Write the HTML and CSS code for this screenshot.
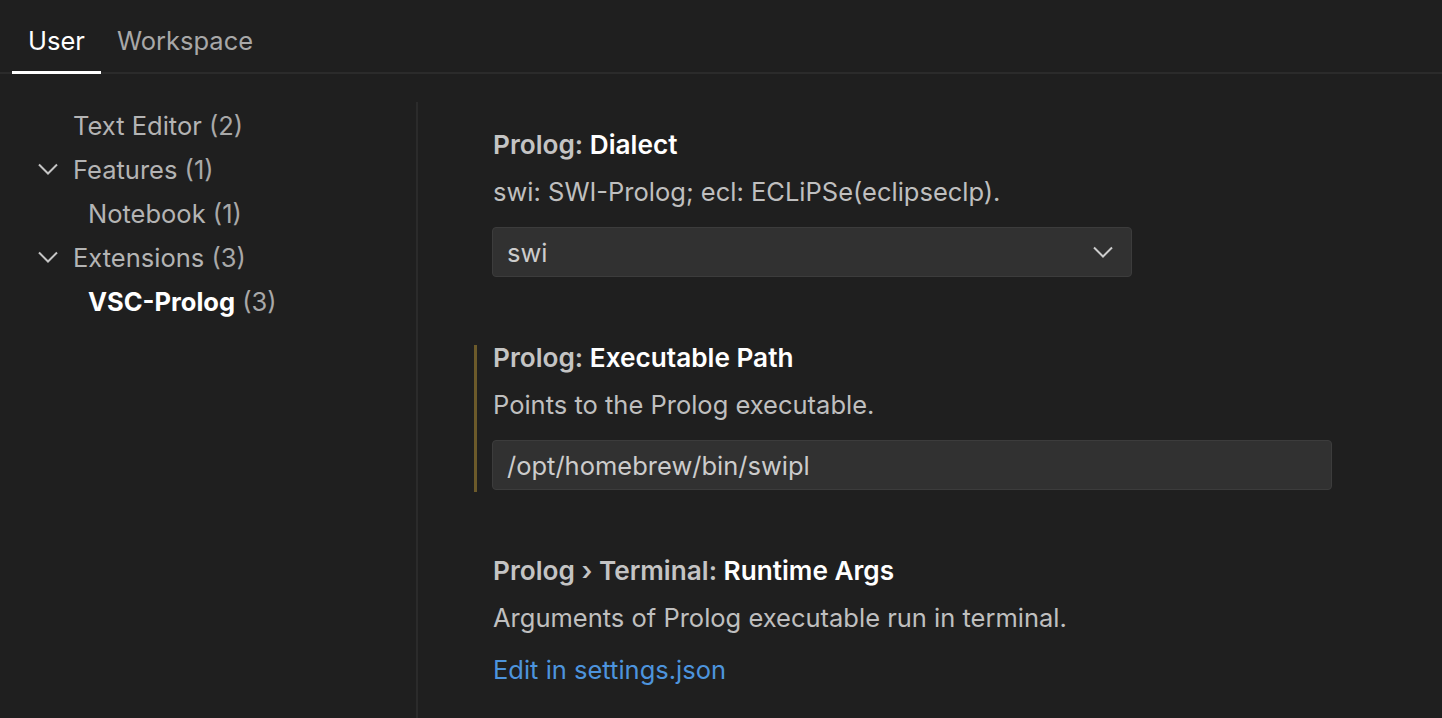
FILE: index.html
```html
<!DOCTYPE html>
<html>
<head>
<meta charset="utf-8">
<link rel="stylesheet" href="styles.css">
</head>
<body>
<div class="page">
  <div class="tabs">
    <div class="tab active">User</div>
    <div class="tab">Workspace</div>
  </div>
  <div class="body">
    <nav class="tree">
      <div class="row lvl1"><span class="twisty"></span><span class="label">Text Editor <span class="count">(2)</span></span></div>
      <div class="row lvl1"><span class="twisty"><svg width="20" height="12" viewBox="0 0 20 12"><path d="M1 1.5 L10 10.5 L19 1.5" fill="none" stroke="#c5c5c5" stroke-width="2"/></svg></span><span class="label">Features <span class="count">(1)</span></span></div>
      <div class="row lvl2"><span class="label">Notebook <span class="count">(1)</span></span></div>
      <div class="row lvl1"><span class="twisty"><svg width="20" height="12" viewBox="0 0 20 12"><path d="M1 1.5 L10 10.5 L19 1.5" fill="none" stroke="#c5c5c5" stroke-width="2"/></svg></span><span class="label">Extensions <span class="count">(3)</span></span></div>
      <div class="row lvl2 selected"><span class="label"><b>VSC-Prolog</b> <span class="count">(3)</span></span></div>
    </nav>
    <div class="sash"></div>
    <main class="settings">
      <section class="setting">
        <div class="title"><span class="cat">Prolog: </span>Dialect</div>
        <div class="desc">swi: SWI-Prolog; ecl: ECLiPSe(eclipseclp).</div>
        <div class="select"><span>swi</span><svg width="20" height="12" viewBox="0 0 20 12"><path d="M1 1.5 L10 10.5 L19 1.5" fill="none" stroke="#cccccc" stroke-width="2"/></svg></div>
      </section>
      <section class="setting modified">
        <div class="title"><span class="cat">Prolog: </span>Executable Path</div>
        <div class="desc">Points to the Prolog executable.</div>
        <div class="input">/opt/homebrew/bin/swipl</div>
      </section>
      <section class="setting">
        <div class="title"><span class="cat">Prolog › Terminal: </span>Runtime Args</div>
        <div class="desc">Arguments of Prolog executable run in terminal.</div>
        <a class="link">Edit in settings.json</a>
      </section>
    </main>
  </div>
</div>
</body>
</html>
```
FILE: styles.css
```css
html, body {
  margin: 0;
  padding: 0;
  background: #1f1f1f;
  height: 100%;
  overflow: hidden;
}
body {
  font-family: Inter, "Noto Sans", sans-serif;
  font-size: 25.5px;
  color: #cccccc;
}
.page {
  display: flex;
  flex-direction: column;
  height: 718px;
}
.tabs {
  display: flex;
  padding-left: 12px;
  border-bottom: 2px solid #2b2b2b;
  height: 74px;
  box-sizing: border-box;
}
.tab {
  padding: 10px 16px 0;
  display: flex;
  align-items: center;
  color: #a8a8a8;
  height: 74px;
  box-sizing: border-box;
  margin-bottom: -2px;
  border-bottom: 3px solid transparent;
}
.tab.active {
  color: #ffffff;
  border-bottom-color: #ffffff;
}
.body {
  flex: 1;
  display: flex;
  min-height: 0;
}
.tree {
  width: 416px;
  padding-top: 29px;
  box-sizing: border-box;
}
.row {
  height: 44px;
  display: flex;
  align-items: center;
  color: #b4b4b4;
}
.lvl1 { padding-left: 38px; }
.lvl2 { padding-left: 88px; }
.twisty {
  width: 35px;
  display: flex;
  align-items: center;
}
.count { color: #a8a8a8; }
.selected b { color: #ffffff; font-weight: 700; }
.sash {
  width: 2px;
  background: #2b2b2b;
  margin-top: 28px;
}
.settings {
  flex: 1;
  padding-left: 56px;
  padding-top: 58px;
}
.setting {
  width: 840px;
  padding: 0 0 2px 16px;
  border-left: 3px solid transparent;
  margin-bottom: 66px;
}
.setting.modified { border-left-color: #6c5a2a; }
.title {
  font-weight: 600;
  font-size: 26.2px;
  color: #ffffff;
  line-height: 26px;
}
.cat { color: #c4c4c4; }
.desc {
  color: #bfbfbf;
  line-height: 36px;
  margin-top: 16px;
}
.select, .input {
  margin-top: 17px;
  margin-left: -1px;
  height: 50px;
  box-sizing: border-box;
  background: #313131;
  border: 1px solid #3c3c3c;
  border-radius: 4px;
  display: flex;
  align-items: center;
  padding-left: 14px;
  color: #cccccc;
}
.select {
  width: 640px;
  justify-content: space-between;
  padding-right: 18px;
}
.input { width: 840px; }
.link {
  display: block;
  margin-top: 16px;
  color: #4d94dd;
  line-height: 36px;
}
```
